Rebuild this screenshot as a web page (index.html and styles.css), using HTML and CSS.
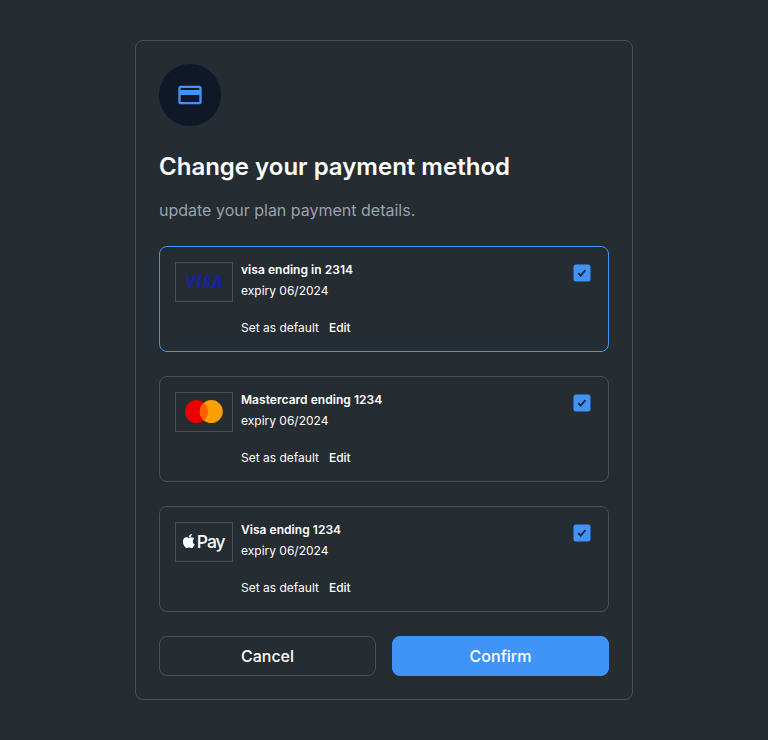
FILE: index.html
```html
<!DOCTYPE html>
<html lang="en">
<head>
<meta charset="utf-8">
<title>Change your payment method</title>
<link rel="stylesheet" href="styles.css">
</head>
<body>
<main class="dialog">
  <div class="badge">
    <svg width="28" height="28" viewBox="0 0 24 24" fill="currentColor"><path d="M20 4H4c-1.110 0-1.990.890-1.990 2L2 18c0 1.110.890 2 2 2h16c1.110 0 2-.890 2-2V6c0-1.110-.890-2-2-2zm0 14H4v-6h16v6zm0-10.300H4V6h16v1.700z"/></svg>
  </div>
  <h1 class="title">Change your payment method</h1>
  <p class="subtitle">update your plan payment details.</p>
  <div class="methods">
    <section class="method method-selected">
      <div class="logo">
        <svg width="56" height="38" viewBox="0 0 56 38"><text class="visa" x="9.500" y="25" textLength="38" lengthAdjust="spacingAndGlyphs">VISA</text></svg>
      </div>
      <div class="details">
        <h2 class="name">visa ending in 2314</h2>
        <p class="expiry">expiry 06/2024</p>
        <div class="actions"><span>Set as default</span><span class="edit">Edit</span></div>
      </div>
      <svg class="check" width="18" height="18" viewBox="0 0 18 18"><rect x=".5" y=".5" width="17" height="17" rx="2.500"/><path d="M5.300 9.200 7.700 11.700 12.500 6"/></svg>
    </section>
    <section class="method">
      <div class="logo">
        <svg width="56" height="38" viewBox="0 0 56 38"><circle cx="20.500" cy="18.600" r="11.500" fill="#eb0001"/><circle cx="35.300" cy="18.600" r="11.500" fill="#f9a000"/><path d="M27.900 9.800a11.500 11.500 0 0 1 0 17.600a11.500 11.500 0 0 1 0-17.600z" fill="#ff5f00"/></svg>
      </div>
      <div class="details">
        <h2 class="name">Mastercard ending 1234</h2>
        <p class="expiry">expiry 06/2024</p>
        <div class="actions"><span>Set as default</span><span class="edit">Edit</span></div>
      </div>
      <svg class="check" width="18" height="18" viewBox="0 0 18 18"><rect x=".5" y=".5" width="17" height="17" rx="2.500"/><path d="M5.300 9.200 7.700 11.700 12.500 6"/></svg>
    </section>
    <section class="method">
      <div class="logo">
        <svg width="56" height="38" viewBox="0 0 56 38"><path transform="translate(3.500 8.600) scale(.78)" fill="#fff" d="M17.050 20.280c-.980.950-2.050.800-3.080.350-1.090-.460-2.090-.480-3.240 0-1.440.620-2.200.440-3.060-.350C2.790 15.250 3.510 7.590 9.050 7.310c1.350.070 2.290.740 3.080.800 1.180-.240 2.310-.930 3.570-.840 1.510.120 2.650.720 3.400 1.800-3.120 1.870-2.380 5.980.480 7.130-.570 1.500-1.310 2.990-2.530 4.080zM12.030 7.250c-.150-2.230 1.660-4.070 3.740-4.250.290 2.580-2.340 4.500-3.740 4.250z"/><text class="pay" x="20.800" y="25" textLength="28.800">Pay</text></svg>
      </div>
      <div class="details">
        <h2 class="name">Visa ending 1234</h2>
        <p class="expiry">expiry 06/2024</p>
        <div class="actions"><span>Set as default</span><span class="edit">Edit</span></div>
      </div>
      <svg class="check" width="18" height="18" viewBox="0 0 18 18"><rect x=".5" y=".5" width="17" height="17" rx="2.500"/><path d="M5.300 9.200 7.700 11.700 12.500 6"/></svg>
    </section>
  </div>
  <div class="buttons">
    <button class="button">Cancel</button>
    <button class="button button-primary">Confirm</button>
  </div>
</main>
</body>
</html>
```
FILE: styles.css
```css
* { box-sizing: border-box; margin: 0; }
body {
  min-height: 740px;
  padding-top: 40px;
  background: #252c32;
  color: #fff;
  font-family: Inter, "Liberation Sans", sans-serif;
}
.dialog {
  width: 498px;
  height: 660px;
  margin: 0 auto;
  padding: 23px;
  border: 1px solid #495057;
  border-radius: 8px;
}
.badge {
  display: flex;
  align-items: center;
  justify-content: center;
  width: 62px;
  height: 62px;
  border-radius: 50%;
  background: #101828;
  color: #4094f7;
}
.title {
  margin-top: 25px;
  font-size: 24px;
  font-weight: 600;
  line-height: 32px;
}
.subtitle {
  margin-top: 15px;
  color: #9aa3ad;
  font-size: 16px;
  line-height: 24px;
}
.methods {
  display: flex;
  flex-direction: column;
  gap: 24px;
  margin-top: 24px;
}
.method {
  display: flex;
  height: 106px;
  padding: 15px;
  border: 1px solid #495057;
  border-radius: 8px;
}
.method-selected { border-color: #4094f7; }
.logo {
  width: 58px;
  height: 40px;
  border: 1px solid #495057;
}
.logo svg { display: block; }
.visa {
  fill: #182396;
  font: italic 800 17px "Open Sans", sans-serif;
}
.pay {
  fill: #fff;
  font: 500 17.5px Inter, sans-serif;
}
.details {
  flex: 1;
  margin-left: 8px;
  font-size: 12px;
}
.name {
  font-size: 12px;
  font-weight: 600;
  line-height: 16px;
  letter-spacing: 0.04px;
}
.expiry { margin-top: 5px; line-height: 16px; }
.actions {
  display: flex;
  gap: 10px;
  margin-top: 21px;
  line-height: 16px;
}
.edit { font-weight: 500; }
.check {
  display: block;
  margin: 2px 2px 0 0;
}
.check rect { fill: #4094f7; }
.check path {
  fill: none;
  stroke: #1a2230;
  stroke-width: 1.8;
}
.buttons {
  display: grid;
  grid-template-columns: 1fr 1fr;
  gap: 16px;
  margin-top: 24px;
}
.button {
  height: 40px;
  padding: 0;
  border: 1px solid #495057;
  border-radius: 8px;
  background: transparent;
  color: #fff;
  font: 500 16px Inter, sans-serif;
}
.button-primary {
  border-color: #4094f7;
  background: #4094f7;
}
```
